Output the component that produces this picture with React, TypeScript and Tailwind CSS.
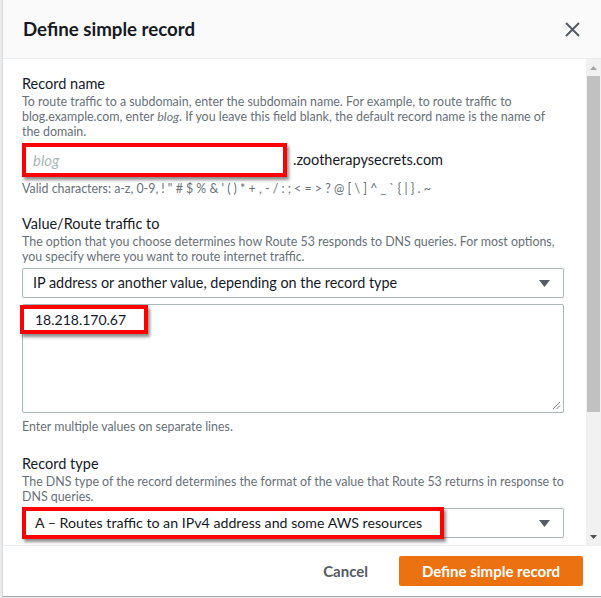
import React from "react";

// red annotation frame used in the screenshot
const redFrame = "border-4 border-[#f00] shadow-[2px_3px_3px_rgba(0,0,0,0.45)]";

function Caret() {
    return (
        <svg width="11" height="7" viewBox="0 0 11 7" className="shrink-0">
            <path d="M0 0h11L5.5 7z" fill="#545b64" />
        </svg>
    );
}

function Label({ children }: { children: React.ReactNode }) {
    return <div className="text-[14.5px] leading-[20px] text-[#16191f]">{children}</div>;
}

function Hint({ children }: { children: React.ReactNode }) {
    return <div className="text-[12.4px] leading-[15px] text-[#687078] whitespace-nowrap">{children}</div>;
}

export default function App() {
    return (
        <div className="w-[601px] h-[598px] bg-[#e9ebed] overflow-hidden font-['Lato',sans-serif] text-[#16191f]">
            <div className="ml-[2px] h-[597px] flex flex-col bg-white border-l border-b border-l-[#d5dbdb] border-b-[#a0a8ad]">
                {/* header */}
                <div className="h-[59px] shrink-0 flex items-center justify-between pl-[20px] pr-[21px] bg-[#fafafa] border-b border-[#eaeded]">
                    <h2 className="text-[18.7px] font-bold">Define simple record</h2>
                    <svg width="15" height="15" viewBox="0 0 15 15">
                        <path d="M1 1l13 13M14 1L1 14" stroke="#545b64" strokeWidth="2" />
                    </svg>
                </div>

                {/* body */}
                <div className="flex flex-1 min-h-0">
                    <div className="flex-1 overflow-hidden pl-[19px] pr-[22px] pt-[15px]">
                        <Label>Record name</Label>
                        <Hint>
                            To route traffic to a subdomain, enter the subdomain name. For example, to route traffic to
                            <br />
                            blog.example.com, enter <i>blog</i>. If you leave this field blank, the default record name is the name of
                            <br />
                            the domain.
                        </Hint>
                        <div className="mt-[4px] flex items-center gap-[6px]">
                            <div className={`w-[265px] h-[34px] flex items-center pl-[7px] bg-white ${redFrame}`}>
                                <span className="italic text-[15px] text-[#aab7b8]">blog</span>
                            </div>
                            <span className="text-[14.5px]">.zootherapysecrets.com</span>
                        </div>
                        <div className="mt-[4px]">
                            <Hint>Valid characters: a-z, 0-9, ! " # $ % &amp; ' ( ) * + , - / : ; &lt; = &gt; ? @ [ \ ] ^ _ ` {"{"} | {"}"} . ~</Hint>
                        </div>

                        <div className="mt-[18px]">
                            <Label>Value/Route traffic to</Label>
                        </div>
                        <Hint>
                            The option that you choose determines how Route 53 responds to DNS queries. For most options,
                            <br />
                            you specify where you want to route internet traffic.
                        </Hint>
                        <div className="mt-[4px] h-[30px] flex items-center justify-between pl-[10px] pr-[13px] border border-[#aab7b8] rounded-[2px]">
                            <span className="text-[14.4px]">IP address or another value, depending on the record type</span>
                            <Caret />
                        </div>
                        <div className="relative mt-[6px] h-[109px] border border-[#aab7b8] rounded-[2px]">
                            <div className={`absolute -left-[3px] top-0 w-[128px] h-[29px] flex items-center pl-[11px] ${redFrame}`}>
                                <span className="text-[14px]">18.218.170.67</span>
                            </div>
                            <svg width="9" height="9" viewBox="0 0 9 9" className="absolute right-[2px] bottom-[2px]">
                                <path d="M1 8L8 1M4.5 8L8 4.5" stroke="#808080" strokeWidth="1" />
                            </svg>
                        </div>
                        <div className="mt-[6px]">
                            <Hint>Enter multiple values on separate lines.</Hint>
                        </div>

                        <div className="mt-[20px]">
                            <Label>Record type</Label>
                        </div>
                        <Hint>
                            The DNS type of the record determines the format of the value that Route 53 returns in response to
                            <br />
                            DNS queries.
                        </Hint>
                        <div className="relative mt-[4px] h-[30px] flex items-center justify-end pr-[13px] border border-[#aab7b8] rounded-[2px]">
                            <div className={`absolute -left-[1px] -top-[2px] w-[422px] h-[32px] flex items-center pl-[9px] ${redFrame}`}>
                                <span className="text-[14.2px] whitespace-nowrap">A – Routes traffic to an IPv4 address and some AWS resources</span>
                            </div>
                            <Caret />
                        </div>
                    </div>

                    {/* scrollbar */}
                    <div className="w-[15px] shrink-0 flex flex-col bg-[#f1f1f1]">
                        <div className="h-[17px] flex items-center justify-center">
                            <svg width="7" height="4" viewBox="0 0 7 4">
                                <path d="M0 4h7L3.5 0z" fill="#a3a3a3" />
                            </svg>
                        </div>
                        <div className="h-[336px] mx-[1px] bg-[#c1c1c1]" />
                        <div className="flex-1" />
                        <div className="h-[17px] flex items-center justify-center">
                            <svg width="7" height="4" viewBox="0 0 7 4">
                                <path d="M0 0h7L3.5 4z" fill="#505050" />
                            </svg>
                        </div>
                    </div>
                </div>

                {/* footer */}
                <div className="h-[51px] shrink-0 flex items-center justify-end gap-[31px] pr-[18px] border-t border-[#eaeded]">
                    <button className="text-[15px] font-bold text-[#545b64]">Cancel</button>
                    <button className="h-[30px] w-[184px] rounded-[2px] bg-[#ec7211] text-white text-[15px] font-bold">
                        Define simple record
                    </button>
                </div>
            </div>
        </div>
    );
}
